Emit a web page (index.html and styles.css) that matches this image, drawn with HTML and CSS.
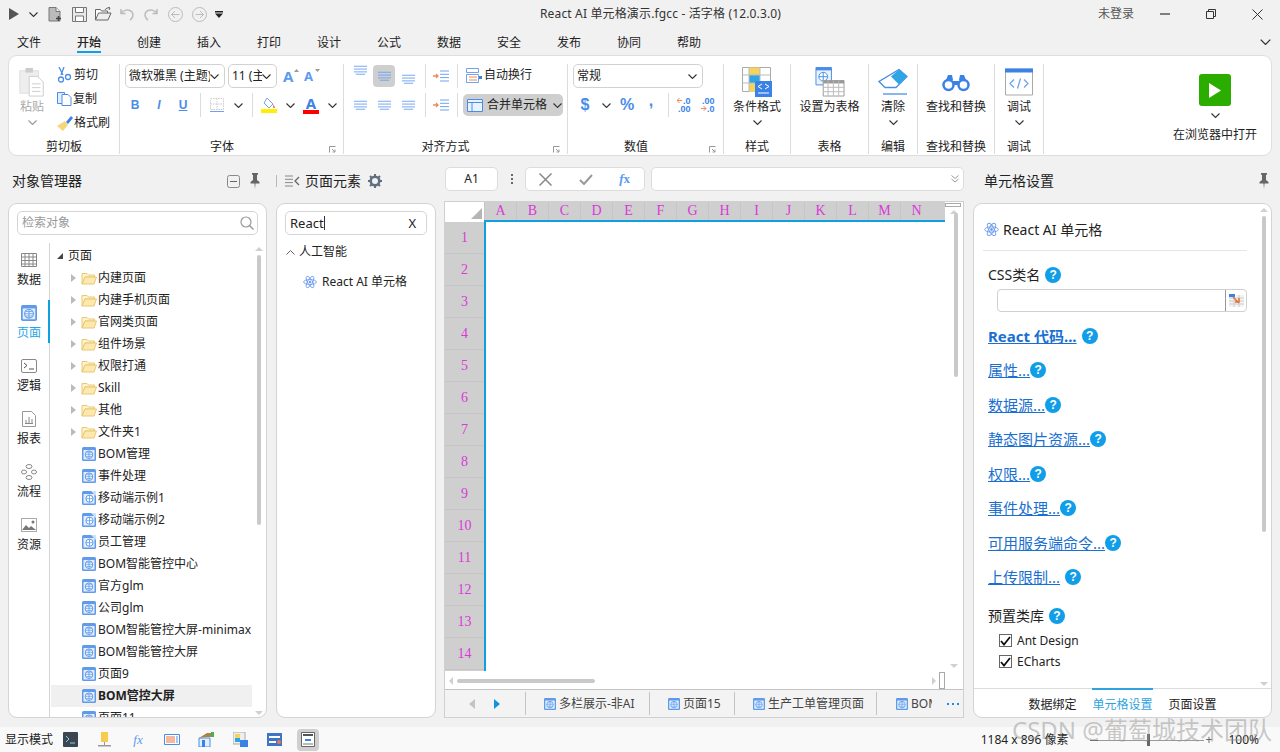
FILE: index.html
```html
<!DOCTYPE html>
<html lang="zh-CN">

<head>
    <meta charset="UTF-8">
    <title>React AI 单元格演示.fgcc - 活字格</title>
    <link rel="stylesheet" href="styles.css">
</head>

<body>
    <svg class="defs" width="0" height="0">
        <symbol id="chev" viewBox="0 0 9 5"><path d="M.5.5l4 4 4-4" fill="none" stroke="#333" stroke-width="1.1"/></symbol>
        <symbol id="page" viewBox="0 0 14 14"><rect width="14" height="14" rx="1.5" fill="#5f9bea"/><rect x="1.5" y="3" width="11" height="9.5" fill="#e3eefc"/><circle cx="7" cy="7.7" r="3.8" fill="#fff" stroke="#5f9bea"/><path d="M3.2 7.7h7.6M7 4v7.4M4.3 5.8h5.4M4.3 9.6h5.4" stroke="#5f9bea" stroke-width=".8"/></symbol>
        <symbol id="pagem" viewBox="0 0 14 14"><rect width="14" height="14" rx="1.5" fill="#5f9bea"/><path d="M9 0h5v5z" fill="#cfe2fb"/><rect x="1.5" y="3" width="11" height="9.5" fill="#e3eefc"/><circle cx="7.5" cy="7.7" r="3.6" fill="#fff" stroke="#5f9bea"/><path d="M4 7.7h7M7.5 4v7.4" stroke="#5f9bea" stroke-width=".8"/></symbol>
        <symbol id="folder" viewBox="0 0 16 14"><path d="M1 2.5h5l1.500 1.500h6v2H4L1 13z" fill="#fff3cf" stroke="#e9c873"/><path d="M4 6h11.500l-2.500 7H1z" fill="#fde9ad" stroke="#e9c873"/></symbol>
        <symbol id="react" viewBox="0 0 16 16"><g fill="none" stroke="#6f9df0" stroke-width="1"><ellipse cx="8" cy="8" rx="7.300" ry="2.800"/><ellipse cx="8" cy="8" rx="7.300" ry="2.800" transform="rotate(60 8 8)"/><ellipse cx="8" cy="8" rx="7.300" ry="2.800" transform="rotate(120 8 8)"/></g><circle cx="8" cy="8" r="1.500" fill="#6f9df0"/></symbol>
        <symbol id="pin" viewBox="0 0 10 16"><path d="M2 0h6v1.500L7 2v5l2.500 2v1.500h-9V9L3 7V2L2 1.500zM4.500 10.500h1L5 16z" fill="#666"/></symbol>
        <symbol id="dlg" viewBox="0 0 7 7"><path d="M.5 6.500v-6h6" fill="none" stroke="#999"/><path d="M3 3l3 3M6 3.500V6H3.500" fill="none" stroke="#999"/></symbol>
        <symbol id="lines" viewBox="0 0 16 10"><path d="M1 1h14M1 4h14M1 7h14M3 9.500h10" stroke="#6ea3f2" stroke-width="1"/></symbol>
        <symbol id="indent" viewBox="0 0 16 12"><path d="M7 1h9M7 4.300h9M7 7.600h9M7 11h9" stroke="#6ea3f2"/><path d="M0 6h5M3 4l2 2-2 2" fill="none" stroke="#ee8a5c" stroke-width="1.300"/></symbol>
    </svg>

    <header class="titlebar">
        <div class="tb_left">
            <svg class="qa_play" width="10" height="12" viewBox="0 0 10 12"><path d="M0 0l10 6-10 6z" fill="#555"/></svg>
            <svg class="qa_chev" width="9" height="5"><use href="#chev"/></svg>
            <span class="qa"><svg width="14" height="15" viewBox="0 0 14 15"><path d="M1 .5h7l4 4v9.500H1z" fill="#bbb" stroke="#777"/><path d="M8 .5v4h4" fill="#eee" stroke="#777"/><path d="M10.500 9v5M8 11.500h5" stroke="#444" stroke-width="1.500"/></svg></span>
            <span class="qa"><svg width="15" height="15" viewBox="0 0 15 15"><path d="M.5.500h14v14H.5z" fill="#e8e8e8" stroke="#777"/><path d="M3.500.5h8v5h-8zM3.500 9h8v5.500h-8z" fill="#fff" stroke="#777"/></svg></span>
            <span class="qa"><svg width="17" height="14" viewBox="0 0 17 14"><path d="M.5 13V2.500h5l1 1.500h6v2" fill="#fff" stroke="#666"/><path d="M.5 13l3-7h12.500l-3 7z" fill="#eee" stroke="#666"/><path d="M10 3c1-2 3-2.500 5-2M13 0l2 1-1 2" fill="none" stroke="#666"/></svg></span>
            <span class="qa"><svg width="14" height="13" viewBox="0 0 14 13"><path d="M1 1v4.500h4.500M1 5.500C3 2 9 .5 12 4c2 3 .5 6.500-2 8" fill="none" stroke="#bbb" stroke-width="1.500"/></svg></span>
            <span class="qa"><svg width="14" height="13" viewBox="0 0 14 13"><path d="M13 1v4.500H8.500M13 5.500C11 2 5 .5 2 4c-2 3-.5 6.500 2 8" fill="none" stroke="#bbb" stroke-width="1.500"/></svg></span>
            <span class="qa"><svg width="15" height="15" viewBox="0 0 15 15"><circle cx="7.500" cy="7.500" r="7" fill="none" stroke="#bbb"/><path d="M11.500 7.500h-8M7 4L3.500 7.500 7 11" fill="none" stroke="#bbb"/></svg></span>
            <span class="qa"><svg width="15" height="15" viewBox="0 0 15 15"><circle cx="7.500" cy="7.500" r="7" fill="none" stroke="#bbb"/><path d="M3.500 7.500h8M8 4l3.500 3.500L8 11" fill="none" stroke="#bbb"/></svg></span>
            <span class="qa_more"><svg width="8" height="7" viewBox="0 0 8 7"><path d="M0 0h8v1.500H0zM0 2.500h8L4 7z" fill="#222"/></svg></span>
        </div>
        <div class="tb_title">React AI 单元格演示.fgcc - 活字格 (12.0.3.0)</div>
        <div class="tb_right">
            <span class="tb_user">未登录</span>
            <span class="win_btn"><svg width="10" height="2"><path d="M0 1h10" stroke="#333" stroke-width="1.200"/></svg></span>
            <span class="win_btn"><svg width="10" height="10" viewBox="0 0 10 10"><path d="M.5 2.500h7v7h-7zM2.500 2.500v-2h7v7h-2" fill="none" stroke="#333"/></svg></span>
            <span class="win_btn"><svg width="11" height="11" viewBox="0 0 11 11"><path d="M.5.500l10 10M10.500.500l-10 10" stroke="#333"/></svg></span>
        </div>
    </header>

    <nav class="menubar">
        <a>文件</a><a class="active"><span>开始</span></a><a>创建</a><a>插入</a><a>打印</a><a>设计</a><a>公式</a><a>数据</a><a>安全</a><a>发布</a><a>协同</a><a>帮助</a>
        <svg class="menu_fold" width="11" height="6"><use href="#chev"/></svg>
    </nav>

    <section class="ribbon">
        <div class="group g_clip">
            <div class="g_body">
                <div class="big big_paste">
                    <svg width="28" height="32" viewBox="0 0 28 32"><path d="M1 4h20v24H1z" fill="#eee" stroke="#ddd"/><path d="M7 1h8v5H7z" fill="#ccc"/><path d="M11 10h9l6 6v15H11z" fill="#fff" stroke="#ccc"/><path d="M14 18h9M14 22h9M14 26h9" stroke="#ccc"/></svg>
                    <span class="big_txt muted">粘贴</span>
                    <svg class="big_chev" width="9" height="5"><use href="#chev" opacity=".5"/></svg>
                </div>
                <div class="small_col">
                    <div class="small"><svg width="16" height="16" viewBox="0 0 16 16"><path d="M2 0l4 8M7 0L4 8" stroke="#4a8de8" stroke-width="1.300"/><circle cx="4" cy="12.500" r="2.500" fill="none" stroke="#4a8de8" stroke-width="1.300"/><circle cx="11" cy="10" r="2.500" fill="none" stroke="#4a8de8" stroke-width="1.300"/></svg><span>剪切</span></div>
                    <div class="small"><svg width="15" height="14" viewBox="0 0 15 14"><path d="M.5.500h7v11h-7z" fill="#e3eefc" stroke="#4a8de8"/><path d="M5 2.500h6l3 3v8H5z" fill="#fff" stroke="#4a8de8"/></svg><span>复制</span></div>
                    <div class="small"><svg width="16" height="16" viewBox="0 0 16 16"><path d="M9 7l5-6 2 2-5 6z" fill="#3b82e6"/><path d="M0 11l8-5 3 4-5 6z" fill="#f5d67a"/></svg><span>格式刷</span></div>
                </div>
            </div>
            <div class="g_label">剪切板</div>
        </div>

        <div class="group g_font">
            <div class="rows">
                <div class="row">
                    <div class="combo combo_font"><span>微软雅黑 (主题)</span><svg width="9" height="5"><use href="#chev"/></svg></div>
                    <div class="combo combo_size"><span>11 (主</span><svg width="9" height="5"><use href="#chev"/></svg></div>
                    <span class="grow_a">A<svg width="5" height="3" viewBox="0 0 5 3"><path d="M0 3l2.500-3L5 3z" fill="#999"/></svg></span>
                    <span class="grow_a grow_small">A<svg width="5" height="3" viewBox="0 0 5 3"><path d="M0 0h5L2.500 3z" fill="#999"/></svg></span>
                </div>
                <div class="row">
                    <span class="ic sym">B</span><span class="ic sym sym_i">I</span><span class="ic sym sym_u">U</span>
                    <span class="vsep"></span>
                    <span class="ic"><svg width="14" height="14" viewBox="0 0 14 14"><path d="M.5.500h13v11H.5zM7 .5v11M.5 6h13" fill="none" stroke="#ccc" stroke-dasharray="1.500 1"/><path d="M0 13.500h14" stroke="#6ea3f2"/></svg></span><span class="ch"><svg width="9" height="5"><use href="#chev"/></svg></span>
                    <span class="vsep"></span>
                    <span class="ic"><svg width="16" height="16" viewBox="0 0 16 16"><path d="M6 1l6 6-4 4-5-5z" fill="#fff" stroke="#6ea3f2"/><path d="M12 7l2 3v1h-2z" fill="#ee8a5c"/><path d="M0 12h16v4H0z" fill="#ffef00"/></svg></span><span class="ch"><svg width="9" height="5"><use href="#chev"/></svg></span>
                    <span class="ic text_a">A</span><span class="ch"><svg width="9" height="5"><use href="#chev"/></svg></span>
                </div>
            </div>
            <div class="g_label">字体<svg class="dlg" width="7" height="7"><use href="#dlg"/></svg></div>
        </div>

        <div class="group g_align">
            <div class="rows">
                <div class="row">
                    <span class="ic al_top"><svg width="15" height="10"><use href="#lines"/></svg></span>
                    <span class="ic"><span class="ic_on"><svg width="15" height="10"><use href="#lines"/></svg></span></span>
                    <span class="ic al_bottom"><svg width="15" height="10"><use href="#lines"/></svg></span>
                    <span class="vsep"></span>
                    <span class="ic ic_narrow"><svg width="16" height="12"><use href="#indent"/></svg></span>
                    <span class="vsep"></span>
                    <span class="wrap_btn"><svg width="16" height="15" viewBox="0 0 16 15"><path d="M.5.500h12v4H.5zM.5 6.500h12v8H.5z" fill="none" stroke="#6ea3f2"/><path d="M3 9h8M3 12h8" stroke="#ee8a5c"/><path d="M13 8h3v3h-3z" fill="#3b82e6"/></svg><span>自动换行</span></span>
                </div>
                <div class="row">
                    <span class="ic"><svg width="15" height="10"><use href="#lines"/></svg></span>
                    <span class="ic"><svg width="15" height="10"><use href="#lines"/></svg></span>
                    <span class="ic"><svg width="15" height="10"><use href="#lines"/></svg></span>
                    <span class="vsep"></span>
                    <span class="ic ic_narrow"><svg width="16" height="12"><use href="#indent"/></svg></span>
                    <span class="vsep"></span>
                    <span class="merge_btn"><svg width="16" height="13" viewBox="0 0 16 13"><path d="M.5.500h15v12H.5zM.5 3.500h15M5 3.500v9" fill="#eaf2fd" stroke="#4a8de8"/></svg><span>合并单元格</span><svg width="9" height="5"><use href="#chev"/></svg></span>
                </div>
            </div>
            <div class="g_label">对齐方式<svg class="dlg" width="7" height="7"><use href="#dlg"/></svg></div>
        </div>

        <div class="group g_num">
            <div class="rows">
                <div class="row">
                    <div class="combo combo_num"><span>常规</span><svg width="9" height="5"><use href="#chev"/></svg></div>
                </div>
                <div class="row">
                    <span class="ic sym sym_big">$</span><span class="ch"><svg width="9" height="5"><use href="#chev"/></svg></span>
                    <span class="ic sym sym_big">%</span><span class="ic sym sym_big sym_comma">,</span>
                    <span class="vsep"></span>
                    <span class="ic"><svg class="dec" width="16" height="16" viewBox="0 0 16 16"><path d="M0 3.500h5M2.500 1L0 3.500 2.500 6" fill="none" stroke="#ee8a5c"/><text x="6" y="7">.0</text><text x="1" y="15">.00</text></svg></span>
                    <span class="ic"><svg class="dec" width="16" height="16" viewBox="0 0 16 16"><text x="1" y="7">.00</text><path d="M0 11.500h5M2.500 9L5 11.500 2.500 14" fill="none" stroke="#ee8a5c"/><text x="6" y="15">.0</text></svg></span>
                </div>
            </div>
            <div class="g_label">数值<svg class="dlg" width="7" height="7"><use href="#dlg"/></svg></div>
        </div>

        <div class="group g_style">
            <div class="big">
                <svg width="30" height="30" viewBox="0 0 30 30"><path d="M.5.500h28v24H.5z" fill="#fff" stroke="#aaa"/><path d="M7 .5h11v8H7z" fill="#f4d35e"/><path d="M7 8h11v8H7z" fill="#2ea6e6"/><path d="M7 16h11v9H7z" fill="#f4d35e"/><path d="M.5 8h28M.5 16h28M7 .5v24M18 .5v24" stroke="#bbb" fill="none"/><path d="M13 14h17v16H13z" fill="#3b82e6"/><path d="M20 17l-4 2.500 4 2.500M23 17l4 2.500-4 2.500M16 26h11" fill="none" stroke="#fff"/></svg>
                <span class="big_txt">条件格式</span>
                <svg class="big_chev" width="9" height="5"><use href="#chev"/></svg>
            </div>
            <div class="g_label">样式</div>
        </div>

        <div class="group g_table">
            <div class="big">
                <svg width="30" height="31" viewBox="0 0 30 31"><path d="M.5.500h16v18H.5z" fill="#eaf2fd" stroke="#4a8de8"/><path d="M.5.500h16v3H.5z" fill="#4a8de8"/><circle cx="8" cy="10" r="4.500" fill="#fff" stroke="#4a8de8"/><path d="M3.500 10h9M8 5.500v9" stroke="#4a8de8"/><path d="M8 14h21.500v16H8z" fill="#fff" stroke="#999"/><path d="M8 14h21.500v3H8z" fill="#999"/><path d="M8 21h21.500M8 25.500h21.500M13 14v16M18.500 14v16M24 14v16" stroke="#bbb"/></svg>
                <span class="big_txt">设置为表格</span>
            </div>
            <div class="g_label">表格</div>
        </div>

        <div class="group g_edit">
            <div class="big">
                <svg width="30" height="27" viewBox="0 0 30 27"><path d="M21 1l8 7-11 11H7l-6-6z" fill="#fff" stroke="#4a8de8" stroke-width="1.300"/><path d="M21 1l8 7-8 8-8-8z" fill="#2ea6e6"/><path d="M5 25.500h24" stroke="#4a8de8" stroke-width="1.300"/></svg>
                <span class="big_txt">清除</span>
                <svg class="big_chev" width="9" height="5"><use href="#chev"/></svg>
            </div>
            <div class="g_label">编辑</div>
        </div>

        <div class="group g_find">
            <div class="big">
                <svg width="28" height="20" viewBox="0 0 28 20"><circle cx="6.500" cy="13" r="5" fill="#fff" stroke="#3b82e6" stroke-width="2.500"/><circle cx="21.500" cy="13" r="5" fill="#fff" stroke="#3b82e6" stroke-width="2.500"/><path d="M4 8l2-5h4l1 5zM17 8l1-5h4l2 5zM11 9h6v4h-6z" fill="#3b82e6"/></svg>
                <span class="big_txt">查找和替换</span>
            </div>
            <div class="g_label">查找和替换</div>
        </div>

        <div class="group g_debug">
            <div class="big">
                <svg width="28" height="27" viewBox="0 0 28 27"><path d="M.5.500h27v26H.5z" fill="#fff" stroke="#aaa"/><path d="M0 0h28v4H0z" fill="#3b82e6"/><path d="M9 11l-4 4 4 4M19 11l4 4-4 4M15.500 10l-3 10" fill="none" stroke="#6ea3f2" stroke-width="1.300"/></svg>
                <span class="big_txt">调试</span>
                <svg class="big_chev" width="9" height="5"><use href="#chev"/></svg>
            </div>
            <div class="g_label">调试</div>
        </div>

        <div class="g_open">
            <span class="run_btn"><svg width="12" height="15" viewBox="0 0 12 15"><path d="M0 0l12 7.500L0 15z" fill="#fff"/></svg></span>
            <svg class="run_chev" width="9" height="5"><use href="#chev"/></svg>
            <span class="run_txt">在浏览器中打开</span>
        </div>
    </section>

    <main class="workspace">
        <div class="col col_left">
            <div class="col_head">
                <h2>对象管理器</h2>
                <svg class="head_box" width="13" height="13" viewBox="0 0 13 13"><rect x=".5" y=".5" width="12" height="12" rx="2" fill="none" stroke="#888"/><path d="M3 6.500h7" stroke="#666"/></svg>
                <svg class="head_pin" width="10" height="16"><use href="#pin"/></svg>
            </div>
            <div class="panel">
                <div class="search"><span class="search_hint">检索对象</span><svg width="14" height="14" viewBox="0 0 14 14"><circle cx="6" cy="6" r="5" fill="none" stroke="#999" stroke-width="1.200"/><path d="M9.500 9.500l4 4" stroke="#999" stroke-width="1.500"/></svg></div>
                <div class="obj_body">
                    <ul class="side">
                        <li><svg width="16" height="14" viewBox="0 0 16 14"><path d="M.5.500h15v13H.5zM.5 4h15M.5 7.500h15M.5 11h15M4 .5v13M8 .5v13M12 .5v13" fill="#fff" stroke="#888"/></svg><span>数据</span></li>
                        <li class="active"><svg width="16" height="15" viewBox="0 0 14 14"><use href="#page"/></svg><span>页面</span></li>
                        <li><svg width="16" height="14" viewBox="0 0 16 14"><rect x=".5" y=".5" width="15" height="13" rx="1.500" fill="#fff" stroke="#888"/><path d="M3 4l3 2.500L3 9M8 10h5" fill="none" stroke="#555"/></svg><span>逻辑</span></li>
                        <li><svg width="14" height="16" viewBox="0 0 14 16"><path d="M.5.500h9l4 4v11H.5z" fill="#fff" stroke="#999"/><path d="M4 12V9M7 12V6M10 12V8M3 12.500h8" stroke="#888"/></svg><span>报表</span></li>
                        <li><svg width="16" height="16" viewBox="0 0 16 16"><g fill="none" stroke="#888"><ellipse cx="8" cy="2.500" rx="3" ry="2"/><ellipse cx="3" cy="8" rx="2.500" ry="2"/><ellipse cx="13" cy="8" rx="2.500" ry="2"/><ellipse cx="8" cy="13.500" rx="3" ry="2"/></g></svg><span>流程</span></li>
                        <li><svg width="16" height="14" viewBox="0 0 16 14"><rect x=".5" y=".5" width="15" height="13" fill="#fff" stroke="#aaa"/><path d="M1 12l4-5 3 3 2-2 5 4z" fill="#777"/><circle cx="12" cy="4" r="1.500" fill="#777"/></svg><span>资源</span></li>
                    </ul>
                    <div class="tree">
                        <div class="t_row t_root"><svg width="6" height="6" viewBox="0 0 6 6"><path d="M6 0v6H0z" fill="#444"/></svg><span>页面</span></div>
                        <div class="t_row"><i class="exp"></i><svg width="16" height="14"><use href="#folder"/></svg><span>内建页面</span></div>
                        <div class="t_row"><i class="exp"></i><svg width="16" height="14"><use href="#folder"/></svg><span>内建手机页面</span></div>
                        <div class="t_row"><i class="exp"></i><svg width="16" height="14"><use href="#folder"/></svg><span>官网类页面</span></div>
                        <div class="t_row"><i class="exp"></i><svg width="16" height="14"><use href="#folder"/></svg><span>组件场景</span></div>
                        <div class="t_row"><i class="exp"></i><svg width="16" height="14"><use href="#folder"/></svg><span>权限打通</span></div>
                        <div class="t_row"><i class="exp"></i><svg width="16" height="14"><use href="#folder"/></svg><span>Skill</span></div>
                        <div class="t_row"><i class="exp"></i><svg width="16" height="14"><use href="#folder"/></svg><span>其他</span></div>
                        <div class="t_row"><i class="exp"></i><svg width="16" height="14"><use href="#folder"/></svg><span>文件夹1</span></div>
                        <div class="t_row t_leaf"><svg width="14" height="14"><use href="#page"/></svg><span>BOM管理</span></div>
                        <div class="t_row t_leaf"><svg width="14" height="14"><use href="#page"/></svg><span>事件处理</span></div>
                        <div class="t_row t_leaf"><svg width="14" height="14"><use href="#pagem"/></svg><span>移动端示例1</span></div>
                        <div class="t_row t_leaf"><svg width="14" height="14"><use href="#pagem"/></svg><span>移动端示例2</span></div>
                        <div class="t_row t_leaf"><svg width="14" height="14"><use href="#pagem"/></svg><span>员工管理</span></div>
                        <div class="t_row t_leaf"><svg width="14" height="14"><use href="#page"/></svg><span>BOM智能管控中心</span></div>
                        <div class="t_row t_leaf"><svg width="14" height="14"><use href="#page"/></svg><span>官方glm</span></div>
                        <div class="t_row t_leaf"><svg width="14" height="14"><use href="#page"/></svg><span>公司glm</span></div>
                        <div class="t_row t_leaf"><svg width="14" height="14"><use href="#page"/></svg><span>BOM智能管控大屏-minimax</span></div>
                        <div class="t_row t_leaf"><svg width="14" height="14"><use href="#page"/></svg><span>BOM智能管控大屏</span></div>
                        <div class="t_row t_leaf"><svg width="14" height="14"><use href="#page"/></svg><span>页面9</span></div>
                        <div class="t_row t_leaf t_on"><svg width="14" height="14"><use href="#page"/></svg><span>BOM管控大屏</span></div>
                        <div class="t_row t_leaf"><svg width="14" height="14"><use href="#page"/></svg><span>页面11</span></div>
                        <span class="bar_arrow bar_up"></span>
                        <span class="bar_thumb tree_thumb"></span>
                        <span class="bar_arrow bar_down tree_down"></span>
                    </div>
                </div>
            </div>
        </div>

        <div class="col col_mid">
            <div class="col_head">
                <span class="head_sep"></span>
                <svg class="head_list" width="15" height="12" viewBox="0 0 15 12"><path d="M0 1h8M0 4.300h8M0 7.600h8M0 11h8" stroke="#888"/><path d="M14 2l-4 4 4 4" fill="none" stroke="#666" stroke-width="1.300"/></svg>
                <h2 class="h_mid">页面元素</h2>
                <svg class="head_gear" width="14" height="14" viewBox="0 0 14 14"><circle cx="7" cy="7" r="4.300" fill="none" stroke="#5f6f80" stroke-width="2.600"/><path d="M7 0v2.500M7 11.500V14M0 7h2.500M11.500 7H14M2 2l2 2M10 10l2 2M12 2l-2 2M4 10l-2 2" stroke="#5f6f80" stroke-width="2"/></svg>
            </div>
            <div class="panel">
                <div class="search search_mid"><span>React</span><i class="caret"></i><span class="search_x">X</span></div>
                <div class="cat"><svg width="9" height="5" viewBox="0 0 9 5"><path d="M.5 4.500l4-4 4 4" fill="none" stroke="#666"/></svg><span>人工智能</span></div>
                <div class="cat_item"><svg width="14" height="14"><use href="#react"/></svg><span>React AI 单元格</span></div>
            </div>
        </div>

        <div class="col col_center">
            <div class="formula">
                <div class="f_name">A1</div>
                <div class="f_dots"><i></i><i></i><i></i></div>
                <div class="f_btns">
                    <svg width="13" height="13" viewBox="0 0 13 13"><path d="M.5.500l12 12M12.500.500l-12 12" stroke="#888" stroke-width="1.500"/></svg>
                    <svg width="14" height="11" viewBox="0 0 14 11"><path d="M1 6l4 4 8-9" fill="none" stroke="#999" stroke-width="2"/></svg>
                    <span class="f_fx"><i>f</i>x</span>
                </div>
                <div class="f_input"><svg width="8" height="8" viewBox="0 0 8 8"><path d="M.5.500L4 3.500 7.500.5M.5 4L4 7l3.500-3" fill="none" stroke="#999"/></svg></div>
            </div>
            <div class="sheet">
                <div class="sheet_grid">
                    <div class="sheet_main">
                        <div class="col_heads">
                            <div class="corner"><i></i></div>
                            <span>A</span><span>B</span><span>C</span><span>D</span><span>E</span><span>F</span><span>G</span><span>H</span><span>I</span><span>J</span><span>K</span><span>L</span><span>M</span><span>N</span>
                        </div>
                        <div class="row_heads">
                            <span>1</span><span>2</span><span>3</span><span>4</span><span>5</span><span>6</span><span>7</span><span>8</span><span>9</span><span>10</span><span>11</span><span>12</span><span>13</span><span>14</span>
                        </div>
                    </div>
                    <div class="v_scroll">
                        <i class="split_h"></i>
                        <span class="bar_arrow v_up"></span>
                        <span class="bar_thumb v_thumb"></span>
                        <span class="bar_arrow bar_down v_down"></span>
                    </div>
                    <div class="h_scroll">
                        <i class="h_left"></i>
                        <span class="h_thumb"></span>
                        <i class="h_right"></i>
                        <i class="split_v"></i>
                    </div>
                </div>
                <div class="sheet_tabs">
                    <div class="tab_nav"><i class="nav_prev"></i><i class="nav_next"></i></div>
                    <div class="tab tab1"><svg width="12" height="12"><use href="#page"/></svg><span>多栏展示-非AI</span></div>
                    <div class="tab tab2"><svg width="12" height="12"><use href="#page"/></svg><span>页面15</span></div>
                    <div class="tab tab3"><svg width="12" height="12"><use href="#page"/></svg><span>生产工单管理页面</span></div>
                    <div class="tab tab4"><svg width="12" height="12"><use href="#page"/></svg><span>BOM管控大屏</span></div>
                    <div class="tab_more"><i></i><i></i><i></i></div>
                </div>
            </div>
        </div>

        <div class="col col_right">
            <div class="col_head">
                <h2 class="h_cell">单元格设置</h2>
                <svg class="head_pin2" width="10" height="16"><use href="#pin"/></svg>
            </div>
            <div class="panel panel_prop">
                <div class="prop">
                    <div class="prop_head"><svg width="15" height="15"><use href="#react"/></svg><span>React AI 单元格</span></div>
                    <div class="prop_label first">CSS类名<span class="help help_gap">?</span></div>
                    <div class="prop_input"><span class="pick"><svg width="15" height="14" viewBox="0 0 15 14"><path d="M0 1h15v12H0z" fill="#f4f4f4"/><path d="M0 4h15M0 7h15M0 10h15M5 1v12M10 1v12" stroke="#ccc"/><path d="M0 0h6v3H0z" fill="#3b82e6"/><path d="M4 3l6 6M6 8h4V4" fill="none" stroke="#e8703a" stroke-width="1.500"/></svg></span></div>
                    <div class="links">
                        <div class="link link_main"><a>React 代码...</a><span class="help help_gap">?</span></div>
                        <div class="link"><a>属性...</a><span class="help">?</span></div>
                        <div class="link"><a>数据源...</a><span class="help">?</span></div>
                        <div class="link"><a>静态图片资源...</a><span class="help">?</span></div>
                        <div class="link"><a>权限...</a><span class="help">?</span></div>
                        <div class="link"><a>事件处理...</a><span class="help">?</span></div>
                        <div class="link"><a>可用服务端命令...</a><span class="help">?</span></div>
                        <div class="link"><a>上传限制...</a><span class="help help_gap">?</span></div>
                    </div>
                    <div class="prop_label lib">预置类库<span class="help help_gap">?</span></div>
                    <div class="check"><i><svg width="11" height="10" viewBox="0 0 11 10"><path d="M1 5l3 3.500L10 1" fill="none" stroke="#111" stroke-width="1.800"/></svg></i><span>Ant Design</span></div>
                    <div class="check"><i><svg width="11" height="10" viewBox="0 0 11 10"><path d="M1 5l3 3.500L10 1" fill="none" stroke="#111" stroke-width="1.800"/></svg></i><span>ECharts</span></div>
                    <span class="bar_arrow prop_up"></span>
                    <span class="bar_thumb prop_thumb"></span>
                    <span class="bar_arrow bar_down prop_down"></span>
                </div>
                <div class="prop_tabs"><a>数据绑定</a><a class="active">单元格设置</a><a>页面设置</a></div>
            </div>
        </div>
    </main>

    <footer class="statusbar">
        <span class="st_label">显示模式</span>
        <span class="st_ic"><svg width="15" height="15" viewBox="0 0 15 15"><rect width="15" height="15" rx="1" fill="#3c4650"/><path d="M3 4l3 3-3 3M7 11h5" fill="none" stroke="#7fd0ff"/></svg></span>
        <span class="st_ic"><svg width="13" height="15" viewBox="0 0 13 15"><path d="M3 0h7v10H3z" fill="#f5cc4e"/><path d="M6 10h1v3H6zM0 13h13v1.500H0z" fill="#999"/></svg></span>
        <span class="st_ic st_fx"><i>f</i>x</span>
        <span class="st_ic"><svg width="16" height="11" viewBox="0 0 16 11"><path d="M.5.500h15v10H.5z" fill="#fff" stroke="#4a8de8"/><path d="M2 2h9v7H2z" fill="#f7b79a"/><path d="M13 2v7" stroke="#4a8de8"/></svg></span>
        <span class="st_ic"><svg width="16" height="15" viewBox="0 0 16 15"><path d="M1 6h11v9H1z" fill="#e3eefc" stroke="#4a8de8"/><path d="M1 6l8-5h6v4H8z" fill="#a8834a"/><path d="M13 0h3v5h-3z" fill="#4caf50"/><path d="M4 8h3v7H4z" fill="#3b82e6"/></svg></span>
        <span class="st_ic"><svg width="15" height="15" viewBox="0 0 15 15"><path d="M0 0h12v12H0z" fill="#eee" stroke="#aaa"/><path d="M2 2h5v4H2z" fill="#f4d35e"/><path d="M2 6h5v4H2z" fill="#2ea6e6"/><path d="M7 8h8v7H7z" fill="#3b82e6"/></svg></span>
        <span class="st_ic"><svg width="15" height="13" viewBox="0 0 15 13"><path d="M0 0h15v13H0z" fill="#3f76c4"/><path d="M2 3h11v2H2zM2 8h7v2H2z" fill="#fff"/><circle cx="12" cy="9" r="2" fill="#e87a5a"/></svg></span>
        <span class="st_ic"><span class="st_on"><svg width="14" height="15" viewBox="0 0 14 15"><path d="M.5.500h13v14H.5z" fill="#fff" stroke="#666"/><path d="M2 2h10v2H2z" fill="#555"/><path d="M4 7h6v2H4z" fill="#3b82e6"/><path d="M2 11h10v2H2z" fill="#bbb"/></svg></span></span>
        <div class="st_right">
            <span class="st_size">1184 x 896 像素</span>
            <span class="zoom_bar"><b class="zb_minus"></b><b class="zb_thumb"></b><b class="zb_plus">+</b></span>
            <span class="st_pct">100%</span>
        </div>
    </footer>

    <div class="watermark">CSDN @葡萄城技术团队</div>
</body>

</html>
```

FILE: styles.css
```css
* {
    margin: 0;
    padding: 0;
    box-sizing: border-box;
}

html,
body {
    width: 1280px;
    height: 752px;
    overflow: hidden;
}

body {
    position: relative;
    background: #f1f1f1;
    color: #222;
    font: 12px/16px "Noto Sans", "Noto Sans CJK SC", sans-serif;
}

ul {
    list-style: none;
}

i {
    font-style: normal;
}

svg {
    display: block;
    flex: none;
}

.defs {
    position: absolute;
}

/* title bar */
.titlebar {
    height: 28px;
    display: flex;
    align-items: center;
}

.tb_left {
    width: 540px;
    padding-left: 9px;
    display: flex;
    align-items: center;
}

.qa_chev {
    margin: 0 5px 0 10px;
}

.qa {
    width: 24px;
    display: flex;
    justify-content: center;
}

.qa_more {
    margin-left: 4px;
}

.tb_title {
    color: #333;
    letter-spacing: 0.15px;
}

.tb_right {
    margin-left: auto;
    display: flex;
    align-items: center;
}

.tb_user {
    margin-right: 8px;
    color: #555;
}

.win_btn {
    width: 46px;
    height: 28px;
    display: flex;
    align-items: center;
    justify-content: center;
}

/* menu */
.menubar {
    height: 27px;
    padding-left: 17px;
    display: flex;
    align-items: center;
}

.menubar a {
    width: 60px;
    height: 27px;
    padding-top: 7px;
}

.menubar a span {
    display: inline-block;
    height: 18px;
    font-weight: 500;
    border-bottom: 2px solid #0ea0e0;
}

.menu_fold {
    margin-left: 523px;
}

/* ribbon */
.ribbon {
    height: 101px;
    margin: 0 8px;
    padding: 8px 0 1px;
    background: #fff;
    border: 1px solid #dedede;
    border-radius: 9px;
    display: flex;
}

.group {
    display: flex;
    flex-direction: column;
    justify-content: space-between;
    border-right: 1px solid #dcdcdc;
}

.g_clip { width: 111px; }
.g_font { width: 224px; padding-left: 5px; }
.g_align { width: 224px; padding-left: 4px; }
.g_num { width: 156px; padding-left: 5px; }
.g_style { width: 67px; }
.g_table { width: 78px; }
.g_edit { width: 49px; }
.g_find { width: 77px; }
.g_debug { width: 49px; }

.g_font .rows { margin-left: -2px; }
.g_font .row:first-child { margin-left: 2px; }

.g_body {
    display: flex;
    padding-left: 8px;
}

.g_label {
    position: relative;
    height: 15px;
    line-height: 15px;
    text-align: center;
}

.g_font .g_label,
.g_align .g_label,
.g_num .g_label {
    padding-right: 24px;
}

.dlg {
    position: absolute;
    right: 7px;
    bottom: 1px;
}

.big {
    display: flex;
    flex-direction: column;
    align-items: center;
    height: 64px;
    white-space: nowrap;
}

.big > svg:first-child {
    box-sizing: content-box;
    height: 30px;
    padding: 3px 0 2px;
}

.big_paste {
    width: 30px;
}

.big_txt {
    height: 16px;
}

.muted {
    color: #aaa;
}

.big_chev {
    margin-top: 5px;
}

.small_col {
    margin: 1px 0 0 10px;
    display: flex;
    flex-direction: column;
    gap: 4px;
}

.small {
    height: 20px;
    display: flex;
    align-items: center;
    gap: 1px;
    white-space: nowrap;
}

.rows {
    display: flex;
    flex-direction: column;
    gap: 5px;
}

.row {
    height: 24px;
    display: flex;
    align-items: center;
}

.combo {
    height: 24px;
    padding: 0 5px 0 3px;
    background: #fff;
    border: 1px solid #d2d2d2;
    border-radius: 5px;
    display: flex;
    align-items: center;
    justify-content: space-between;
    overflow: hidden;
    white-space: nowrap;
}

.combo span {
    overflow: hidden;
}

.combo_font { width: 100px; }
.combo_size { width: 49px; margin-left: 3px; }
.combo_num { width: 130px; }

.grow_a {
    position: relative;
    width: 12px;
    margin-left: 6px;
    color: #5b9bf0;
    font-size: 15px;
    font-weight: 700;
    line-height: 24px;
}

.grow_a svg {
    position: absolute;
    top: 5px;
    right: -4px;
}

.grow_small {
    margin-left: 9px;
    font-size: 13px;
}

.ic {
    width: 24px;
    height: 24px;
    display: flex;
    align-items: center;
    justify-content: center;
}

.ic_narrow {
    width: 22px;
}

.ic_on {
    width: 22px;
    height: 22px;
    background: #cfcfcf;
    border-radius: 4px;
    display: flex;
    align-items: center;
    justify-content: center;
}

.al_top svg { margin-top: -13px; }
.al_bottom svg { margin-top: 5px; }

.ch {
    width: 18px;
    display: flex;
    justify-content: center;
}

.vsep {
    width: 1px;
    height: 24px;
    margin: 0 4px 0 5px;
    background: #dcdcdc;
}

.sym {
    color: #4a8de8;
    font: 700 12px/24px "Liberation Sans", sans-serif;
}

.sym_i { font-style: italic; }
.sym_u { text-decoration: underline; }
.sym_big { font-size: 16px; }
.sym_comma { padding-bottom: 9px; }

.text_a {
    position: relative;
    color: #3b82e6;
    font-size: 15px;
    font-weight: 700;
    line-height: 20px;
    align-items: flex-start;
}

.text_a::after {
    content: "";
    position: absolute;
    left: 4px;
    top: 17px;
    width: 16px;
    height: 4px;
    background: #f00;
}

.dec text {
    fill: #3b82e6;
    font: 700 9px "Liberation Sans", sans-serif;
}

.wrap_btn {
    margin: -2px 0 0 4px;
    display: flex;
    align-items: center;
    gap: 2px;
}

.merge_btn {
    width: 100px;
    height: 22px;
    margin-left: 1px;
    padding: 0 3px 0 4px;
    background: #cfcfcf;
    border-radius: 5px;
    display: flex;
    align-items: center;
    gap: 4px;
    white-space: nowrap;
}

.merge_btn svg:last-child {
    margin-left: 2px;
}

.g_open {
    flex: 1;
    padding-right: 14px;
    display: flex;
    flex-direction: column;
    align-items: flex-end;
}

.run_btn {
    width: 32px;
    height: 32px;
    margin: 10px 26px 0 0;
    background: #2bad00;
    border-radius: 3px;
    display: flex;
    align-items: center;
    justify-content: center;
}

.run_chev {
    margin: 7px 37px 0 0;
}

.run_txt {
    margin-top: 9px;
}

/* workspace */
.workspace {
    height: 571px;
    padding: 0 8px 9px;
    display: flex;
}

.col {
    display: flex;
    flex-direction: column;
}

.col_left { width: 259px; margin-right: 9px; }
.col_mid { width: 160px; margin-right: 8px; }
.col_center { width: 520px; margin-right: 9px; }
.col_right { width: 299px; }

.col_head {
    height: 32px;
    margin: 9px 0 6px;
    display: flex;
    align-items: center;
}

h2 {
    font-size: 14px;
    font-weight: 400;
}

.col_left h2 { margin-left: 4px; }
.head_box { margin-left: 145px; }
.head_pin { margin-left: 10px; }

.head_sep {
    width: 1px;
    height: 12px;
    background: #bbb;
}

.head_list { margin-left: 8px; }
.h_mid { margin-left: 5px; }
.head_gear { margin-left: 7px; }
.h_cell { margin-left: 11px; }
.head_pin2 { margin-left: 205px; }

.panel {
    flex: 1;
    min-height: 0;
    background: #fff;
    border: 1px solid #d4d4d4;
    border-radius: 9px;
    display: flex;
    flex-direction: column;
    overflow: hidden;
}

.search {
    height: 24px;
    margin: 7px 8px 0;
    padding: 0 3px 0 4px;
    border: 1px solid #d4d4d4;
    border-radius: 5px;
    display: flex;
    align-items: center;
    justify-content: space-between;
    flex: none;
}

.search_hint {
    color: #999;
}

.obj_body {
    flex: 1;
    min-height: 0;
    margin-top: 8px;
    display: flex;
}

.side {
    width: 41px;
    padding-top: 7px;
    border-right: 1px solid #d4d4d4;
    flex: none;
}

.side li {
    position: relative;
    height: 53px;
    display: flex;
    flex-direction: column;
    align-items: center;
}

.side li svg {
    height: 20px;
    padding: 2px 0;
    box-sizing: border-box;
}

.side li span {
    margin-top: 2px;
}

.side li.active {
    color: #1ea5e8;
}

.side li.active::after {
    content: "";
    position: absolute;
    top: -3px;
    right: -1px;
    width: 2px;
    height: 43px;
    background: #0ea0e0;
}

.tree {
    position: relative;
    flex: 1;
    padding: 2px 0 0 1px;
    overflow: hidden;
}

.t_row {
    width: 201px;
    height: 22px;
    padding-left: 20px;
    display: flex;
    align-items: center;
    white-space: nowrap;
}

.t_row span {
    margin-left: 1px;
}

.t_root {
    padding-left: 6px;
}

.t_root span {
    margin-left: 5px;
}

.t_leaf {
    padding-left: 31px;
}

.t_leaf span {
    margin-left: 2px;
}

.t_on {
    background: #f0f0f0;
    font-weight: 700;
}

.exp {
    width: 0;
    height: 0;
    margin-right: 5px;
    border-left: 5px solid #bbb;
    border-top: 4px solid transparent;
    border-bottom: 4px solid transparent;
}

.bar_arrow {
    position: absolute;
    width: 0;
    height: 0;
    border-left: 4px solid transparent;
    border-right: 4px solid transparent;
    border-bottom: 4px solid #d0d0d0;
}

.bar_down {
    border-bottom: 0;
    border-top: 4px solid #d0d0d0;
}

.bar_thumb {
    position: absolute;
    width: 4px;
    background: #c9c9c9;
    border-radius: 2px;
}

.bar_up { top: 4px; right: 3px; }
.tree_thumb { top: 12px; right: 5px; height: 270px; }
.tree_down { top: 468px; right: 3px; }

/* middle panel */
.search_mid {
    justify-content: flex-start;
    padding-right: 10px;
    font-size: 13px;
}

.caret {
    width: 1px;
    height: 14px;
    background: #333;
}

.search_x {
    margin-left: auto;
}

.cat {
    height: 20px;
    margin: 7px 0 0 9px;
    display: flex;
    align-items: center;
    gap: 4px;
}

.cat_item {
    height: 20px;
    margin: 10px 0 0 26px;
    display: flex;
    align-items: center;
    gap: 5px;
}

/* formula bar */
.formula {
    height: 24px;
    margin: 11px 0 10px;
    display: flex;
    align-items: center;
    flex: none;
}

.f_name,
.f_btns,
.f_input {
    height: 24px;
    background: #fff;
    border: 1px solid #dcdcdc;
    border-radius: 5px;
}

.f_name {
    width: 53px;
    margin-left: 1px;
    line-height: 22px;
    text-align: center;
}

.f_dots {
    width: 27px;
    display: flex;
    flex-direction: column;
    align-items: center;
    gap: 2px;
}

.f_dots i {
    width: 2px;
    height: 2px;
    background: #666;
}

.f_btns {
    width: 120px;
    padding: 0 14px 0 13px;
    display: flex;
    align-items: center;
    justify-content: space-between;
}

.f_fx {
    color: #5b9bf0;
    font: 700 13px/20px "Liberation Serif", serif;
}

.f_fx i,
.st_fx i {
    font-style: italic;
}

.f_input {
    flex: 1;
    margin-left: 6px;
    padding-right: 4px;
    display: flex;
    align-items: center;
    justify-content: flex-end;
}

/* sheet */
.sheet {
    flex: 1;
    min-height: 0;
    background: #fff;
    border: 1px solid #d0d0d0;
    display: flex;
    flex-direction: column;
}

.sheet_grid {
    flex: 1;
    min-height: 0;
    display: grid;
    grid-template-columns: 1fr 18px;
    grid-template-rows: 1fr 18px;
}

.sheet_main {
    min-height: 0;
    overflow: hidden;
    display: flex;
    flex-direction: column;
}

.col_heads {
    height: 20px;
    background: #cfcfcf;
    border-bottom: 2px solid #0ea0e0;
    display: flex;
    flex: none;
    color: #d93ad9;
    font: 14px/18px "Liberation Serif", serif;
    text-align: center;
}

.col_heads span {
    width: 32px;
    border-left: 1px solid #c6c6c6;
}

.corner {
    position: relative;
    width: 39px;
    background: #fff;
    margin-bottom: -2px;
}

.corner i {
    position: absolute;
    right: 2px;
    bottom: 3px;
    width: 0;
    height: 0;
    border-left: 11px solid transparent;
    border-bottom: 11px solid #b5b5b5;
}

.row_heads {
    width: 41px;
    flex: 1;
    background: #cfcfcf;
    border-right: 2px solid #0ea0e0;
    color: #d93ad9;
    font: 14px/32px "Liberation Serif", serif;
    text-align: center;
}

.row_heads span {
    display: block;
    height: 32px;
    border-bottom: 1px solid #c6c6c6;
}

.v_scroll,
.h_scroll {
    position: relative;
}

.split_h {
    position: absolute;
    top: 1px;
    left: 0;
    width: 16px;
    height: 4px;
    border: 1px solid #aaa;
}

.v_up { top: 8px; right: 5px; }
.v_thumb { top: 11px; right: 5px; height: 164px; }
.v_down { bottom: 3px; right: 5px; }

.h_scroll {
    grid-column: 1 / 3;
}

.h_left {
    position: absolute;
    left: 4px;
    top: 6px;
    border-right: 4px solid #d0d0d0;
    border-top: 4px solid transparent;
    border-bottom: 4px solid transparent;
}

.h_thumb {
    position: absolute;
    left: 12px;
    top: 8px;
    width: 138px;
    height: 4px;
    background: #c9c9c9;
    border-radius: 2px;
}

.h_right {
    position: absolute;
    left: 487px;
    top: 6px;
    border-left: 4px solid #d0d0d0;
    border-top: 4px solid transparent;
    border-bottom: 4px solid transparent;
}

.split_v {
    position: absolute;
    left: 494px;
    top: 1px;
    width: 6px;
    height: 17px;
    border: 1px solid #aaa;
}

.sheet_tabs {
    height: 28px;
    background: #f3f3f3;
    border-top: 1px solid #c4c4c4;
    padding: 2px 0;
    display: flex;
    flex: none;
    white-space: nowrap;
}

.tab_nav {
    width: 80px;
    display: flex;
    align-items: center;
    padding-left: 24px;
    gap: 19px;
}

.nav_prev {
    border-right: 6px solid #c4c4c4;
    border-top: 5px solid transparent;
    border-bottom: 5px solid transparent;
}

.nav_next {
    border-left: 6px solid #0e95dc;
    border-top: 5px solid transparent;
    border-bottom: 5px solid transparent;
}

.tab {
    border-left: 1px solid #c4c4c4;
    display: flex;
    align-items: center;
    gap: 3px;
    color: #444;
    overflow: hidden;
}

.tab1 { width: 124px; padding-left: 18px; }
.tab2 { width: 85px; padding-left: 18px; }
.tab3 { width: 142px; padding-left: 18px; }
.tab4 { width: 56px; padding-left: 19px; }

.tab_more {
    margin-left: 15px;
    display: flex;
    align-items: center;
    gap: 3px;
}

.tab_more i {
    width: 2px;
    height: 2px;
    background: #0e95dc;
}

/* property panel */
.panel_prop {
    position: relative;
}

.prop {
    position: relative;
    flex: 1;
    min-height: 0;
}

.prop_head {
    width: 264px;
    height: 47px;
    margin-left: 9px;
    padding: 5px 0 0 1px;
    border-bottom: 1px solid #e6e6e6;
    display: flex;
    align-items: center;
    gap: 4px;
    font-size: 14px;
}

.prop_label {
    height: 20px;
    padding-left: 14px;
    display: flex;
    align-items: center;
    font-size: 14px;
}

.first {
    margin-top: 14px;
}

.lib {
    margin-top: 19px;
}

.help {
    width: 16px;
    height: 16px;
    background: #109ee8;
    border-radius: 50%;
    color: #fff;
    font: 700 12px/16px "Liberation Sans", sans-serif;
    text-align: center;
    flex: none;
}

.help_gap {
    margin-left: 5px;
}

.prop_input {
    width: 250px;
    height: 23px;
    margin: 4px 0 0 23px;
    border: 1px solid #d0d0d0;
    border-radius: 4px;
    display: flex;
    justify-content: flex-end;
}

.pick {
    width: 21px;
    border-left: 1px solid #999;
    display: flex;
    align-items: center;
    justify-content: center;
}

.links {
    margin-top: 14px;
    padding-left: 14px;
    display: flex;
    flex-direction: column;
    gap: 14.45px;
}

.link {
    height: 20px;
    display: flex;
    align-items: center;
    font-size: 15px;
    line-height: 20px;
}

.link a {
    color: #1a6fd0;
    text-decoration: underline;
}

.link_main {
    font-weight: 700;
}

.check {
    height: 21px;
    padding-left: 25px;
    display: flex;
    align-items: center;
    gap: 5px;
}

.lib + .check {
    margin-top: 4px;
}

.check i {
    width: 13px;
    height: 13px;
    border: 1px solid #666;
    display: flex;
    align-items: center;
    justify-content: center;
}

.prop_up { top: 4px; right: 3px; }
.prop_thumb { top: 12px; right: 5px; height: 316px; }
.prop_down { top: 478px; right: 3px; }

.prop_tabs {
    height: 29px;
    border-top: 1px solid #dcdcdc;
    display: flex;
    justify-content: center;
    gap: 16px;
    flex: none;
}

.prop_tabs a {
    line-height: 29px;
    margin-top: -1px;
    border-top: 2px solid transparent;
    height: 29px;
}

.prop_tabs a.active {
    color: #2ea3e0;
    border-top-color: #2ea3e0;
}

/* status bar */
.statusbar {
    height: 25px;
    padding-left: 5px;
    background: #f9f9f9;
    display: flex;
    align-items: center;
}

.st_label {
    width: 48px;
}

.st_ic {
    width: 34px;
    display: flex;
    align-items: center;
    justify-content: center;
}

.st_fx {
    color: #5b9bf0;
    font: italic 13px/16px "Liberation Serif", serif;
}

.st_on {
    width: 22px;
    height: 22px;
    background: #cfcfcf;
    border-radius: 4px;
    display: flex;
    align-items: center;
    justify-content: center;
}

.st_right {
    margin-left: auto;
    padding-right: 21px;
    display: flex;
    align-items: center;
}

.zoom_bar {
    position: relative;
    width: 122px;
    height: 16px;
    margin: 0 16px 0 22px;
}

.zoom_bar::before {
    content: "";
    position: absolute;
    left: 8px;
    right: 8px;
    top: 8px;
    height: 1px;
    background: #999;
}

.zb_minus {
    position: absolute;
    left: 0;
    top: 8px;
    width: 8px;
    height: 1px;
    background: #666;
}

.zb_thumb {
    position: absolute;
    left: 57px;
    top: 2px;
    width: 3px;
    height: 12px;
    background: #666;
}

.zb_plus {
    position: absolute;
    right: 0;
    top: 0;
    font-weight: 400;
    color: #666;
}

.watermark {
    position: absolute;
    left: 1012px;
    top: 714px;
    color: rgba(150, 150, 150, 0.5);
    font-size: 24px;
    line-height: 32px;
    white-space: nowrap;
}
```
